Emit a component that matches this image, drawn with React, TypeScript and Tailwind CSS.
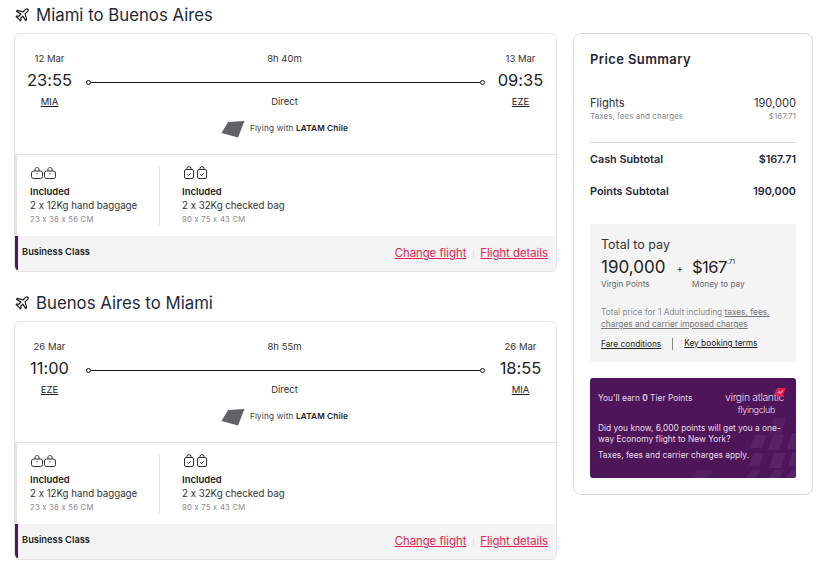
import { Fragment } from "react";

type LegProps = {
  title: string;
  depDate: string;
  depTime: string;
  depCode: string;
  duration: string;
  arrDate: string;
  arrTime: string;
  arrCode: string;
};

const legs: LegProps[] = [
  { title: "Miami to Buenos Aires", depDate: "12 Mar", depTime: "23:55", depCode: "MIA", duration: "8h 40m", arrDate: "13 Mar", arrTime: "09:35", arrCode: "EZE" },
  { title: "Buenos Aires to Miami", depDate: "26 Mar", depTime: "11:00", depCode: "EZE", duration: "8h 55m", arrDate: "26 Mar", arrTime: "18:55", arrCode: "MIA" },
];

// background tiles of the promo card: x, y, width, height, colour
const tiles: [number, number, number, number, string][] = [
  [64, 19, 12, 13, "#5a2464"],
  [83, 2, 12, 17, "#542060"],
  [82, 19, 11, 15, "#5a2464"],
  [101, 17, 12, 16, "#5a2464"],
  [63, 37, 10, 13, "#5a2464"],
  [83, 37, 12, 15, "#5a2464"],
  [102, 37, 10, 13, "#5a2464"],
  [6, 54, 16, 8, "#542060"],
  [60, 54, 10, 8, "#582262"],
  [83, 54, 10, 8, "#582262"],
  [100, 54, 12, 8, "#582262"],
];

function PlaneIcon() {
  return (
    <svg width="14" height="14" viewBox="0 0 24 24" fill="none" stroke="#222" strokeWidth="2.1" strokeLinejoin="round" className="mt-[4px] ml-[1px] shrink-0">
      <path d="M22 2c-1.300-1-3-.5-4.200.7L14 6.500 4 4 2.500 5.500l7.500 5-3.500 3.700-3.200-.6L2 15l4 3 3 4 1.300-1.300-.6-3.200 3.700-3.500 5 7.500 1.500-1.500-2.500-10 3.800-3.800C22.400 5.500 23 3.200 22 2z" />
    </svg>
  );
}

function CabinBag() {
  return (
    <svg width="12" height="12" viewBox="0 0 12 12" fill="none" stroke="#333" strokeWidth="1" className="shrink-0">
      <rect x="0.500" y="4" width="11" height="7.500" rx="2" />
      <path d="M4 4V2.200c0-2.200 4-2.200 4 0V4" />
      <path d="M6 6v1.200" />
    </svg>
  );
}

function CheckedBag() {
  return (
    <svg width="10" height="13" viewBox="0 0 10 13" fill="none" stroke="#333" strokeWidth="1" className="shrink-0">
      <rect x="0.500" y="3.500" width="9" height="9" rx="1.500" />
      <path d="M3 3.500V2c0-1.800 4-1.800 4 0v1.500" />
      <path d="M3.300 8.300l1.300 1.300 2.100-2.500" />
    </svg>
  );
}

function TailFin() {
  return (
    <svg width="24" height="17" viewBox="0 0 24 17">
      <path d="M7 1 L23.500 0 L17 16.500 L0.500 12 Z" fill="#5f6368" />
    </svg>
  );
}

function Baggage({ icons, gap, weight, size }: { icons: React.ReactNode; gap: string; weight: string; size: string }) {
  return (
    <div>
      <div className={`flex h-[14px] items-start ${gap}`}>
        {icons}
        {icons}
      </div>
      <div className="mt-[5px] text-[9.500px] leading-[14px] font-semibold text-[#222]">Included</div>
      <div className="text-[9.700px] leading-[14px] text-[#333]">{weight}</div>
      <div className="mt-[1px] text-[7.700px] leading-[12px] tracking-[0.03em] text-[#8c8c8c]">{size}</div>
    </div>
  );
}

function Leg({ title, depDate, depTime, depCode, duration, arrDate, arrTime, arrCode }: LegProps) {
  return (
    <section>
      <h2 className="flex h-[33px] items-start gap-[7px] pt-[4px] text-[16.800px] leading-[22px] text-[#1f2937]">
        <PlaneIcon />
        {title}
      </h2>
      <div className="overflow-hidden rounded-[6px] border border-[#e3e3e3] bg-white">
        <div className="h-[120px] pt-[18px]">
          <div className="flex">
            <div className="w-[69px] text-center">
              <div className="text-[9.500px] leading-[14px] text-[#333]">{depDate}</div>
              <div className="mt-[2px] text-[16.500px] leading-[24px] text-[#1f1f1f]">{depTime}</div>
              <div className="mt-[3px] text-[9.500px] leading-[14px] text-[#222] underline">{depCode}</div>
            </div>
            <div className="flex-1 text-center">
              <div className="text-[9.500px] leading-[14px] text-[#333]">{duration}</div>
              <div className="mt-[9px] ml-[2px] flex h-[14px] items-center">
                <span className="h-[5px] w-[5px] shrink-0 rounded-full border border-[#111]" />
                <span className="h-[1px] flex-1 bg-[#111]" />
                <span className="h-[5px] w-[5px] shrink-0 rounded-full border border-[#111]" />
              </div>
              <div className="mt-[6px] text-[9.500px] leading-[14px] text-[#333]">Direct</div>
            </div>
            <div className="w-[71px] text-center">
              <div className="text-[9.500px] leading-[14px] text-[#333]">{arrDate}</div>
              <div className="mt-[2px] text-[16.500px] leading-[24px] text-[#1f1f1f]">{arrTime}</div>
              <div className="mt-[3px] text-[9.500px] leading-[14px] text-[#222] underline">{arrCode}</div>
            </div>
          </div>
          <div className="mt-[12px] flex items-center justify-center gap-[5px] pr-[2px]">
            <TailFin />
            <span className="pb-[2px] text-[8.200px] tracking-[0.02em] text-[#444]">
              Flying with <b className="font-semibold text-[#222]">LATAM Chile</b>
            </span>
          </div>
        </div>
        <div className="flex h-[82px] border-t border-l-[2px] border-t-[#e3e3e3] border-l-[#e3e3e3] pt-[11px] pl-[13px]">
          <div className="h-[60px] w-[130px] border-r border-[#e3e3e3]">
            <Baggage icons={<CabinBag />} gap="gap-[1px] pt-[1px] pl-[1px]" weight="2 x 12Kg hand baggage" size="23 x 36 x 56 CM" />
          </div>
          <div className="pl-[22px]">
            <Baggage icons={<CheckedBag />} gap="gap-[3px] pl-[2px]" weight="2 x 32Kg checked bag" size="90 x 75 x 43 CM" />
          </div>
        </div>
        <div className="flex h-[35px] items-center border-l-[3px] border-[#4f1559] bg-[#f4f4f4] pr-[8px] pl-[4px]">
          <span className="pb-[3px] text-[9.300px] font-semibold text-[#222]">Business Class</span>
          <span className="ml-auto flex items-center gap-[6.500px] text-[11.300px] text-[#e01f4f] underline">
            <span>Change flight</span>
            <span className="h-[8px] w-[1px] bg-[#e3e3e3]" />
            <span>Flight details</span>
          </span>
        </div>
      </div>
    </section>
  );
}

export default function App() {
  return (
    <div className="flex h-[564px] w-[830px] gap-[16px] overflow-hidden bg-white pl-[14px] font-['Inter',sans-serif] [font-feature-settings:'calt'_0]">
      <div className="flex w-[543px] shrink-0 flex-col gap-[16px]">
        {legs.map((leg) => (
          <Fragment key={leg.title}>
            <Leg {...leg} />
          </Fragment>
        ))}
      </div>
      <aside className="mt-[33px] h-[462px] w-[240px] shrink-0 rounded-[8px] border border-[#d9d9d9] px-[16px] pt-[16px]">
        <h3 className="text-[13px] leading-[18px] font-semibold tracking-[0.03em] text-[#1f2937]">Price Summary</h3>
        <div className="mt-[28px] flex justify-between text-[11.100px] leading-[14px] text-[#333]">
          <span>Flights</span>
          <span>190,000</span>
        </div>
        <div className="flex justify-between text-[8.100px] leading-[12px] text-[#8c8c8c]">
          <span>Taxes, fees and charges</span>
          <span>$167.71</span>
        </div>
        <div className="mt-[20px] flex justify-between border-t border-[#d9d9d9] pt-[9px] text-[10.800px] leading-[16px] font-semibold text-[#1f2937]">
          <span>Cash Subtotal</span>
          <span>$167.71</span>
        </div>
        <div className="mt-[16px] flex justify-between text-[10.800px] leading-[16px] font-semibold text-[#1f2937]">
          <span>Points Subtotal</span>
          <span>190,000</span>
        </div>
        <div className="mt-[24px] h-[138px] rounded-[3px] bg-[#f4f4f4] px-[11px] pt-[12px]">
          <div className="text-[12.500px] leading-[18px] text-[#333]">Total to pay</div>
          <div className="mt-[2px] flex items-start">
            <div>
              <div className="text-[17px] leading-[22px] text-[#222]">190,000</div>
              <div className="text-[8.200px] leading-[12px] text-[#666]">Virgin Points</div>
            </div>
            <span className="mt-[5px] ml-[11px] text-[10px] text-[#333]">+</span>
            <div className="ml-[9px]">
              <div className="flex items-start text-[16.500px] leading-[22px] tracking-[-0.03em] text-[#222]">
                $167<span className="mt-[1px] text-[6.500px] leading-[10px] tracking-normal">.71</span>
              </div>
              <div className="text-[8.200px] leading-[12px] text-[#666]">Money to pay</div>
            </div>
          </div>
          <p className="mt-[16px] text-[8.300px] leading-[12px] text-[#8c8c8c]">
            Total price for 1 Adult including <span className="text-[#777] underline">taxes, fees,</span>{" "}
            <span className="text-[#777] underline">charges and carrier imposed charges</span>
          </p>
          <div className="mt-[8px] flex items-center text-[8.300px] leading-[12px] text-[#222] underline">
            <span>Fare conditions</span>
            <span className="mx-[11px] h-[12px] w-[1px] bg-[#888]" />
            <span className="-mt-[2px]">Key booking terms</span>
          </div>
        </div>
        <div className="relative mt-[16px] h-[100px] overflow-hidden rounded-[3px] bg-[#4f1559] px-[8px] pt-[15px] text-[8.400px] leading-[11px] text-[#e8dcea]">
          <svg className="absolute right-0 bottom-0" width="110" height="62" viewBox="0 0 110 62">
            {tiles.map(([x, y, w, h, fill]) => (
              <path key={`${x}-${y}`} d={`M${x + 5} ${y}h${w}l-5 ${h}h${-w}z`} fill={fill} />
            ))}
          </svg>
          <div className="relative">
            You'll earn <b className="font-semibold">0</b> Tier Points
          </div>
          <div className="absolute top-[14px] right-[12px] text-right font-light tracking-[-0.045em] whitespace-nowrap text-[#e6dfe8]">
            <div className="text-[10.500px] leading-[12px]">virgin atlantic</div>
            <div className="pr-[9px] text-[9px] leading-[11px]">flyingclub</div>
          </div>
          <svg className="absolute top-[10px] right-[10px]" width="12" height="9" viewBox="0 0 12 9">
            <path d="M3 0H12L8 9L0 7Z" fill="#e01f4f" />
            <path d="M4 5c1-2 2-2 2 0s2-2 3-3" fill="none" stroke="#fff" strokeWidth="0.700" />
          </svg>
          <p className="relative mt-[19px]">Did you know, 6,000 points will get you a one-way Economy flight to New York?</p>
          <p className="relative mt-[5px]">Taxes, fees and carrier charges apply.</p>
        </div>
      </aside>
    </div>
  );
}
